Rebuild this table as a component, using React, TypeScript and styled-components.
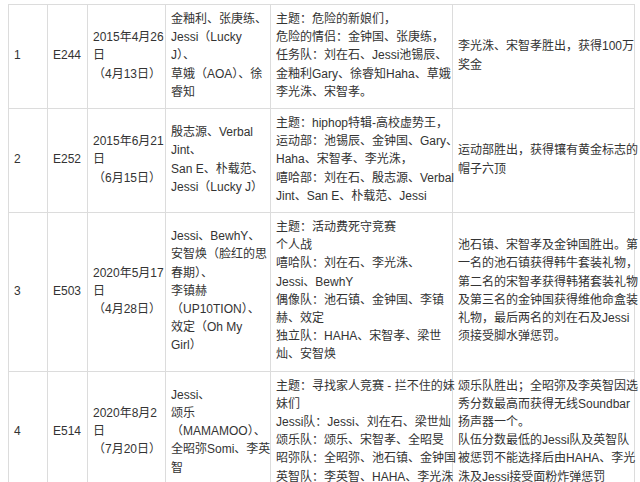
import React from 'react';
import styled, { createGlobalStyle } from 'styled-components';

const GlobalStyle = createGlobalStyle`
  body {
    margin: 0;
    background: #fff;
  }
`;

const Page = styled.div`
  padding: 4px 0 0 8px;
  width: 640px;
  height: 482px;
  overflow: hidden;
  box-sizing: border-box;
`;

const Table = styled.table`
  border-collapse: collapse;
  table-layout: fixed;
  width: 626px;
  font-family: "Liberation Sans", "Noto Sans CJK SC", sans-serif;
  font-size: 12px;
  line-height: 18.2px;
  color: #333;
`;

const Col = styled.col<{ $w: number }>`
  width: ${(p) => p.$w}px;
`;

const Cell = styled.td`
  border: 1px solid #dcdcdc;
  padding: 5px 4px 7px 5px;
  vertical-align: middle;
  white-space: nowrap;
  overflow: visible;
`;

const Line = styled.div`
  white-space: nowrap;
`;

type Episode = {
  no: string;
  code: string;
  date: string[];
  guests: string[];
  theme: string[];
  result: string[];
};

const episodes: Episode[] = [
  {
    no: '1',
    code: 'E244',
    date: ['2015年4月26', '日', '（4月13日）'],
    guests: ['金釉利、张庚练、', 'Jessi（Lucky', 'J）、', '草娥（AOA）、徐', '睿知'],
    theme: [
      '主题：危险的新娘们，',
      '危险的情侣：金钟国、张庚练，',
      '任务队：刘在石、Jessi池锡辰、',
      '金釉利Gary、徐睿知Haha、草娥',
      '李光洙、宋智孝。',
    ],
    result: ['李光洙、宋智孝胜出，获得100万', '奖金'],
  },
  {
    no: '2',
    code: 'E252',
    date: ['2015年6月21', '日', '（6月15日）'],
    guests: ['殷志源、Verbal', 'Jint、', 'San E、朴载范、', 'Jessi（Lucky J）'],
    theme: [
      '主题：hiphop特辑-高校虚势王，',
      '运动部：池锡辰、金钟国、Gary、',
      'Haha、宋智孝、李光洙，',
      '嘻哈部：刘在石、殷志源、Verbal',
      'Jint、San E、朴载范、Jessi',
    ],
    result: ['运动部胜出，获得镶有黄金标志的', '帽子六顶'],
  },
  {
    no: '3',
    code: 'E503',
    date: ['2020年5月17', '日', '（4月28日）'],
    guests: [
      'Jessi、BewhY、',
      '安智焕（脸红的思',
      '春期）、',
      '李镇赫',
      '（UP10TION）、',
      '效定（Oh My',
      'Girl）',
    ],
    theme: [
      '主题：活动费死守竞赛',
      '个人战',
      '嘻哈队：刘在石、李光洙、',
      'Jessi、BewhY',
      '偶像队：池石镇、金钟国、李镇',
      '赫、效定',
      '独立队：HAHA、宋智孝、梁世',
      '灿、安智焕',
    ],
    result: [
      '池石镇、宋智孝及金钟国胜出。第',
      '一名的池石镇获得韩牛套装礼物，',
      '第二名的宋智孝获得韩猪套装礼物',
      '及第三名的金钟国获得维他命盒装',
      '礼物，最后两名的刘在石及Jessi',
      '须接受脚水弹惩罚。',
    ],
  },
  {
    no: '4',
    code: 'E514',
    date: ['2020年8月2', '日', '（7月20日）'],
    guests: ['Jessi、', '颂乐', '（MAMAMOO）、', '全昭弥Somi、李英', '智'],
    theme: [
      '主题：寻找家人竞赛 - 拦不住的妹',
      '妹们',
      'Jessi队：Jessi、刘在石、梁世灿',
      '颂乐队：颂乐、宋智孝、全昭旻',
      '昭弥队：全昭弥、池石镇、金钟国',
      '英智队：李英智、HAHA、李光洙',
    ],
    result: [
      '颂乐队胜出；全昭弥及李英智因选',
      '秀分数最高而获得无线Soundbar',
      '扬声器一个。',
      '队伍分数最低的Jessi队及英智队',
      '被惩罚不能选择后由HAHA、李光',
      '洙及Jessi接受面粉炸弹惩罚',
    ],
  },
];

const Lines = ({ lines }: { lines: string[] }) => (
  <>
    {lines.map((l, i) => (
      <Line key={i}>{l}</Line>
    ))}
  </>
);

const App = () => {
  return (
    <Page>
      <GlobalStyle />
      <Table>
        <colgroup>
          <Col $w={39} />
          <Col $w={40} />
          <Col $w={78} />
          <Col $w={105} />
          <Col $w={182} />
          <Col $w={182} />
        </colgroup>
        <tbody>
          {episodes.map((ep) => (
            <tr key={ep.code}>
              <Cell>{ep.no}</Cell>
              <Cell>{ep.code}</Cell>
              <Cell>
                <Lines lines={ep.date} />
              </Cell>
              <Cell>
                <Lines lines={ep.guests} />
              </Cell>
              <Cell>
                <Lines lines={ep.theme} />
              </Cell>
              <Cell>
                <Lines lines={ep.result} />
              </Cell>
            </tr>
          ))}
        </tbody>
      </Table>
    </Page>
  );
};

export default App;
